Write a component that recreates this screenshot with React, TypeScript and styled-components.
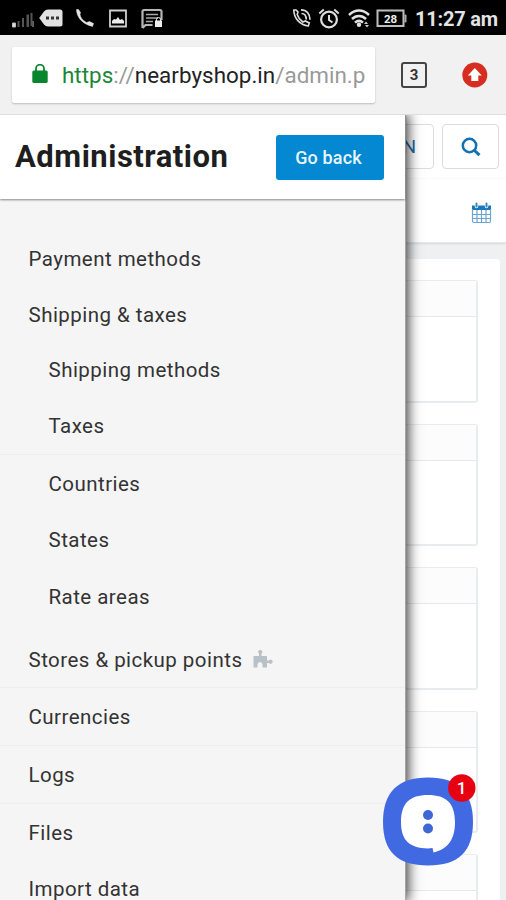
import React from "react";
import styled, { createGlobalStyle } from "styled-components";

const GlobalStyle = createGlobalStyle`
  * { box-sizing: border-box; }
  html, body { margin: 0; padding: 0; overflow: hidden; }
  body { font-family: Roboto, sans-serif; background: #fff; }
`;

const Screen = styled.div`
  position: relative;
  width: 506px;
  height: 900px;
  overflow: hidden;
  display: flex;
  flex-direction: column;
`;

const StatusBar = styled.header`
  height: 35px;
  flex: none;
  background: #000;
  display: flex;
  justify-content: space-between;
  align-items: center;
  padding: 2px 8px 0 11px;
  color: #e4e4e4;
`;

const StatusGroup = styled.div`
  display: flex;
  align-items: center;
`;

const Glyph = styled.svg<{ $w: number; $h?: number; $gap?: number }>`
  display: block;
  flex: none;
  width: ${(p) => p.$w}px;
  height: ${(p) => p.$h ?? 22}px;
  margin-left: ${(p) => p.$gap ?? 0}px;
`;

const Clock = styled.time`
  width: 83px;
  margin-left: 8px;
  font-size: 20px;
  font-weight: 700;
  line-height: 24px;
  letter-spacing: -0.2px;
  white-space: nowrap;
`;

const BrowserBar = styled.div`
  height: 80px;
  flex: none;
  display: flex;
  align-items: center;
  background: #f1f1f1;
  border-bottom: 1px solid #dedede;
  padding-left: 12px;
`;

const AddressField = styled.div`
  width: 363px;
  height: 56px;
  background: #fff;
  border-radius: 2px;
  box-shadow: 0 1px 2px rgba(0, 0, 0, 0.22);
  display: flex;
  align-items: center;
  padding: 0 9px 0 20px;
`;

const Url = styled.div`
  margin-left: 14px;
  width: 304px;
  overflow: hidden;
  white-space: nowrap;
  font-size: 22.4px;
  line-height: 32px;
  letter-spacing: 0.03px;
  color: #999;
`;

const Scheme = styled.span`
  color: #1b8736;
`;

const Host = styled.span`
  color: #222;
`;

const TabCount = styled.div`
  width: 26px;
  height: 26px;
  margin-left: 26px;
  border: 2px solid #444;
  border-radius: 3px;
  display: grid;
  place-items: center;
  font-size: 15px;
  font-weight: 700;
  color: #333;
`;

const Page = styled.main`
  flex: 1;
  min-height: 0;
  display: flex;
  flex-direction: column;
  background: #eef0f1;
`;

const Toolbar = styled.div`
  height: 64px;
  flex: none;
  background: #fff;
  display: flex;
  justify-content: flex-end;
  gap: 8px;
  padding: 9px 7px 0 0;
  border-bottom: 1px solid #fafafa;
`;

const ToolButton = styled.div<{ $w: number }>`
  width: ${(p) => p.$w}px;
  height: 45px;
  border: 1px solid #d9dddf;
  border-radius: 4px;
  display: flex;
  align-items: center;
  justify-content: flex-end;
  padding-right: 17px;
  color: #1d67a8;
  font-size: 19px;
`;

const DateBar = styled.div`
  height: 64px;
  flex: none;
  background: #fff;
  border-bottom: 1px solid #e5e7e8;
  box-shadow: 0 1px 2px rgba(0, 0, 0, 0.1);
  display: flex;
  align-items: center;
  justify-content: flex-end;
  padding: 4px 14px 0 0;
`;

const Panel = styled.section`
  margin: 16px 6px 0 0;
  flex: 1;
  min-height: 0;
  overflow: hidden;
  background: #fff;
  border-radius: 0 4px 0 0;
  padding: 21px 22px 0 200px;
  display: flex;
  flex-direction: column;
  gap: 21px;
`;

const Card = styled.div`
  flex: none;
  height: 122.6px;
  border: 2px solid #e9ecee;
  border-width: 1.5px 2px 2px;
  border-radius: 3px;
`;

const CardHead = styled.div`
  height: 36px;
  background: #fcfcfc;
  border-bottom: 1.5px solid #e6e9eb;
`;

const Drawer = styled.aside`
  position: absolute;
  left: 0;
  top: 115px;
  bottom: 0;
  width: 406px;
  background: #f5f5f5;
  border-right: 1px solid #a5a5a5;
  clip-path: inset(0 -24px 0 0);
  box-shadow: 1px 0 12px 1px rgba(0, 0, 0, 0.8);
`;

const DrawerHead = styled.div`
  height: 84px;
  background: #fff;
  box-shadow: 0 1px 2px rgba(0, 0, 0, 0.45);
  display: flex;
  align-items: center;
  justify-content: space-between;
  padding: 0 21px 0 15px;
`;

const Title = styled.h1`
  margin: 0;
  font-size: 31px;
  line-height: 36px;
  font-weight: 700;
  letter-spacing: 0.5px;
  color: #1e1e1e;
`;

const BackButton = styled.button`
  width: 108px;
  height: 45px;
  padding: 0 3px 0 0;
  border: 0;
  border-radius: 3px;
  background: #0388d1;
  color: #e9f5fc;
  font: 500 18px Roboto, sans-serif;
  letter-spacing: 0.15px;
`;

const Menu = styled.nav`
  padding-top: 32px;
`;

const MenuItem = styled.div<{ $h: number; $sub?: boolean; $line?: boolean; $top?: number }>`
  height: ${(p) => p.$h}px;
  margin-top: ${(p) => p.$top ?? 0}px;
  padding-left: ${(p) => (p.$sub ? 48.5 : 28.5)}px;
  border-bottom: ${(p) => (p.$line ? "1px solid #ededed" : "0")};
  display: flex;
  align-items: center;
  font-size: 20.5px;
  letter-spacing: 0.46px;
  color: #333;
  white-space: nowrap;
`;

const ChatButton = styled.div`
  position: absolute;
  left: 383px;
  top: 773px;
  width: 94px;
  height: 94px;
`;

type Entry = { label: string; h: number; sub?: boolean; line?: boolean; top?: number; addon?: boolean };

const entries: Entry[] = [
  { label: "Payment methods", h: 56 },
  { label: "Shipping & taxes", h: 56 },
  { label: "Shipping methods", h: 54, sub: true },
  { label: "Taxes", h: 58, sub: true, line: true },
  { label: "Countries", h: 57, sub: true },
  { label: "States", h: 56, sub: true },
  { label: "Rate areas", h: 57, sub: true },
  { label: "Stores & pickup points", h: 55, top: 8, line: true, addon: true },
  { label: "Currencies", h: 58, line: true },
  { label: "Logs", h: 58, line: true },
  { label: "Files", h: 57 },
  { label: "Import data", h: 56 },
];

const slimHandset = "M2 1c0 6 4 14 16 17l1-3-4-2-3 1C8 12 6 9 5.500 6L6 4 4 1z";

function StatusIcons() {
  return (
    <StatusGroup>
      <Glyph $w={24} viewBox="0 0 24 22">
        <path d="M1.500 19h3v-4h-3z M22 19v-6" fill="#ddd" stroke="#bbb" />
        <path d="M6.500 19v-6h2v6z M11 19v-9h2v9z M15.500 19V6.500h2.500V19z M19.500 18V5h2v13z" fill="#555" />
      </Glyph>
      <Glyph $w={26} $gap={3} viewBox="0 0 26 22">
        <path d="M1.200 10 6 3.500Q7.500 1.500 10 1.500h12q2.500 0 2.500 2.500v12q0 2.500-2.500 2.500H10q-2.500 0-4-2z" fill="#e2e2e2" />
        <path d="M8 8.500h3v3H8z M13 8.500h3v3h-3z M18 8.500h3v3h-3z" fill="#333" />
      </Glyph>
      <Glyph $w={21} $gap={11} viewBox="0 0 21 22">
        <path d={slimHandset} transform="translate(-.5 .5)" fill="#e4e4e4" stroke="#e4e4e4" strokeWidth=".5" />
      </Glyph>
      <Glyph $w={20} $gap={12} viewBox="0 0 20 22">
        <path d="M2 2.500h16v16H2z" fill="none" stroke="#cfcfcf" strokeWidth="1.800" />
        <path d="M4 15.500V13l2-2 2 .5 2-2.500 2 3 2-1 2 2v2.500z" fill="#ececec" />
      </Glyph>
      <Glyph $w={24} $gap={12} viewBox="0 0 24 22">
        <path d="M2.500 20V3.500Q2.500 2 4 2h16q1.500 0 1.500 1.500V12M2.500 20l3-3h7" fill="none" stroke="#b5b5b5" strokeWidth="2.200" />
        <path d="M6 6.500h12M6 10h12M6 13.500h7" stroke="#a9a9a9" strokeWidth="1.700" />
        <path d="M15 12.500h7v6.500h-7z" fill="#eee" />
        <path d="M16.500 13v-1.500a2 2 0 0 1 4 0V13" fill="none" stroke="#eee" />
      </Glyph>
    </StatusGroup>
  );
}

function SystemIcons() {
  return (
    <StatusGroup>
      <Glyph $w={20} viewBox="0 0 20 22">
        <path d="M1.800 2c0 8 6 15 14.500 16l1-3-4-2-2.500 1C8 12 6 9 5.200 6.500L6 4 4 2z" fill="none" stroke="#ddd" strokeWidth="1.600" />
        <path d="M9 1.800c5.500 0 9 4 9 10M9.500 5.500c3 0 4.700 2.500 4.700 6" fill="none" stroke="#ddd" strokeWidth="1.700" />
      </Glyph>
      <Glyph $w={22} $gap={6} viewBox="0 0 22 22">
        <circle cx="11" cy="11.500" r="7.900" fill="none" stroke="#ddd" strokeWidth="2.200" />
        <path d="M11 7v5l3.500 2.500M1.300 5.500l4.500-4M20.700 5.500l-4.500-4" fill="none" stroke="#ddd" strokeWidth="2" />
      </Glyph>
      <Glyph $w={22} $gap={8} viewBox="0 0 22 22">
        <path d="M1 7C7 1 15 1 21 7M4 11c4-4 10-4 14 0M7 14.700c2.500-2.300 5.500-2.300 8 0" fill="none" stroke="#e2e2e2" strokeWidth="2.500" />
        <circle cx="11" cy="16.700" r="2.200" fill="#e2e2e2" />
        <path d="m16 16 2-2.500 2 2.500zM17 17h4l-2 2.500z" fill="#ccc" />
      </Glyph>
      <Glyph $w={31} $gap={6} viewBox="0 0 31 22">
        <path d="M1.500 2.500h26v15.500h-26z" fill="none" stroke="#bdbdbd" strokeWidth="2" />
        <path d="M28.500 7h1.500v7h-1.500" fill="#aaa" stroke="#aaa" />
        <text x="14.500" y="14.500" textAnchor="middle" fontSize="11.500" fontWeight="700" fill="#eee">28</text>
      </Glyph>
      <Clock>11:27 am</Clock>
    </StatusGroup>
  );
}

export default function App() {
  return (
    <>
      <GlobalStyle />
      <Screen>
        <StatusBar>
          <StatusIcons />
          <SystemIcons />
        </StatusBar>
        <BrowserBar>
          <AddressField>
            <Glyph $w={16} $h={22} viewBox="0 0 16 22">
              <path d="M4 9V4.700a4 4 0 0 1 8 0V9" fill="none" stroke="#0b8630" strokeWidth="1.800" />
              <rect x=".3" y="6.500" width="15.400" height="12.500" rx="1.500" fill="#0b8630" />
            </Glyph>
            <Url>
              <Scheme>https</Scheme>://<Host>nearbyshop.in</Host>/admin.p
            </Url>
          </AddressField>
          <TabCount>3</TabCount>
          <Glyph $w={26} $h={26} $gap={35} viewBox="0 0 26 26">
            <circle cx="12.800" cy="13" r="12.500" fill="#d62d20" />
            <path d="m12.800 6 7 7.500h-3.500V19h-7v-5.500h-3.500z" fill="#fff" />
          </Glyph>
        </BrowserBar>
        <Page>
          <Toolbar>
            <ToolButton $w={60}>EN</ToolButton>
            <ToolButton $w={57}>
              <Glyph $w={20} $h={20} viewBox="0 0 20 20">
                <circle cx="8.500" cy="8.500" r="6.700" fill="none" stroke="#1270b5" strokeWidth="2.500" />
                <path d="m13.500 13.500 5 4.700" stroke="#1270b5" strokeWidth="3" />
              </Glyph>
            </ToolButton>
          </Toolbar>
          <DateBar>
            <Glyph $w={21} $h={22} viewBox="0 0 21 22">
              <path d="M1 3.500h19V8H1z" fill="#1976b7" />
              <path d="M1.500 7v12q0 1.500 1.500 1.500h15q1.500 0 1.500-1.500V7M6 8v12.500M10.500 8v12.500M15 8v12.500M1.500 12.500h18M1.500 16.500h18" fill="none" stroke="#69a5d0" strokeWidth="1.200" />
              <path d="M5.500 4.500V1.800M15.500 4.500V1.800" stroke="#fff" strokeWidth="3.500" strokeLinecap="round" />
              <path d="M5.500 4.500V1.500M15.500 4.500V1.500" stroke="#3685bf" strokeWidth="2" strokeLinecap="round" />
            </Glyph>
          </DateBar>
          <Panel>
            {[0, 1, 2, 3, 4].map((n) => (
              <Card key={n}>
                <CardHead />
              </Card>
            ))}
          </Panel>
        </Page>
        <Drawer>
          <DrawerHead>
            <Title>Administration</Title>
            <BackButton>Go back</BackButton>
          </DrawerHead>
          <Menu>
            {entries.map((e) => (
              <MenuItem key={e.label} $h={e.h} $sub={e.sub} $line={e.line} $top={e.top}>
                {e.label}
                {e.addon && (
                  <Glyph $w={20} $h={20} $gap={11} viewBox="0 0 20 20">
                    <path d="M.5 6H6V3.500a2 2 0 1 1 2.500 0V6H14v4.500h2a2 2 0 1 1 0 2.500h-2v4.500H9.500v-3q-.5-2.500-2.500-2.500t-2.500 2.500v3h-4z" fill="#b9c1c8" />
                  </Glyph>
                )}
              </MenuItem>
            ))}
          </Menu>
        </Drawer>
        <ChatButton>
          <Glyph $w={94} $h={94} viewBox="0 0 94 94">
            <path d="M45 4.500C75 4.500 90 19 90 49c0 30-15 43.500-45 43.500S0 79 0 49C0 19 15 4.500 45 4.500z" fill="#4169e1" />
            <path d="M45 22c18.500 0 27 8.500 27 27 0 16-6 27-21.500 30.500L49.500 75l-4.500.5C26.500 75 18 67.500 18 49s8.500-27 27-27z" fill="#fff" />
            <circle cx="45" cy="42" r="5" fill="#3d68d5" />
            <circle cx="45" cy="55.500" r="5" fill="#3d68d5" />
            <circle cx="78.800" cy="15" r="13.700" fill="#e60012" />
            <text x="78.500" y="20.500" textAnchor="middle" fontSize="17" fontWeight="500" fill="#fff">1</text>
          </Glyph>
        </ChatButton>
      </Screen>
    </>
  );
}
